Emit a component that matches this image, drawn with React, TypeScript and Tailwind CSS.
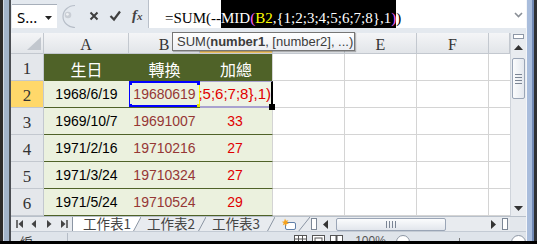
import type { ReactNode } from 'react';

const dataRows = [
  { n: 3, a: '1969/10/7', b: '19691007', c: '33' },
  { n: 4, a: '1971/2/16', b: '19710216', c: '27' },
  { n: 5, a: '1971/3/24', b: '19710324', c: '27' },
  { n: 6, a: '1971/5/24', b: '19710524', c: '29' },
];

function LeftFrame() {
  return (
    <div className="w-[11px] shrink-0 bg-[linear-gradient(to_right,#2e2a2a_0_3px,#d3dae4_3px_4px,#a3b3ca_4px_9px,#4a4d52_9px_11px)]" />
  );
}

function RightFrame() {
  return (
    <div className="w-[11px] shrink-0 bg-[linear-gradient(to_right,#f4f6f9_0_1px,#a9bddc_1px_6px,#7189b4_6px_8px,#2f3134_8px_11px)]" />
  );
}

function FormulaBar() {
  return (
    <div className="flex h-[28px] shrink-0">
      <div className="w-[1px]" />
      <div className="mt-[4px] flex w-[45px] items-center justify-between border-t border-[#a7afba] bg-white pl-[5px] pr-[5px] pt-[2px] text-[15px] text-black">
        <span>S...</span>
        <svg width="7" height="4" viewBox="0 0 7 4">
          <path d="M0 0h7L3.5 4z" fill="#222" />
        </svg>
      </div>
      <div className="flex w-[91px] items-center">
        <svg width="72" height="28" viewBox="0 0 72 28">
          <path d="M18 5.5 A12 11 0 0 0 18 27.5" fill="none" stroke="#b7bec8" strokeWidth="1.2" />
          <circle cx="11" cy="15" r="3.3" fill="#c9ced5" />
          <circle cx="10.4" cy="14.3" r="1.4" fill="#eef0f3" />
          <path d="M33.5 12.5l7 7M40.5 12.5l-7 7" stroke="#3f3f3f" strokeWidth="2" />
          <path d="M53.5 16l3.5 3.5 6-8" fill="none" stroke="#3f3f3f" strokeWidth="2.2" />
        </svg>
        <span className="ml-[3px] mt-[2px] font-['Liberation_Serif',serif] text-[15px] font-bold italic leading-none text-[#444]">
          f<span className="text-[11px]">x</span>
        </span>
      </div>
      <div className="flex w-[362px] items-stretch border-l border-[#b9c0ca] bg-white pl-[16px] font-['Liberation_Serif',serif] text-[15px] text-black">
        <span className="flex items-center pt-[9px]">=SUM(--</span>
        <span className="flex items-center bg-black pt-[9px]">
          <span className="text-white">MID</span>
          <span className="text-[#ff66ff]">(</span>
          <span className="text-[#ffff00]">B2</span>
          <span className="text-white">,{'{'}1;2;3;4;5;6;7;8{'}'},1</span>
          <span className="text-[#ff66ff]">)</span>
        </span>
        <span className="flex items-center pt-[9px]">)</span>
      </div>
      <div className="flex w-[16px] items-center justify-center bg-white pt-[2px]">
        <svg width="9" height="6" viewBox="0 0 9 6">
          <path d="M1 1l3.5 3.5L8 1" fill="none" stroke="#8a8f96" strokeWidth="1.6" />
        </svg>
      </div>
    </div>
  );
}

function Cell({ className = '', children }: { className?: string; children?: ReactNode }) {
  return <div className={`flex items-center justify-center overflow-hidden ${className}`}>{children}</div>;
}

// C and D sit under the tooltip, so their letters are not shown
function ColHead({ label, active }: { label?: string; active?: boolean }) {
  return (
    <Cell
      className={`border-r border-b border-[#c3c8cf] pt-[3px] font-['Liberation_Serif',serif] text-[16px] text-[#333] ${
        active ? 'bg-[linear-gradient(#f9e3a8,#f5c765)]' : 'bg-[linear-gradient(#f4f5f7,#e2e5e9)]'
      }`}
    >
      {label}
    </Cell>
  );
}

function RowHead({ n, active }: { n: number; active?: boolean }) {
  return (
    <Cell
      className={`border-r border-b border-[#c3c8cf] pt-[4px] font-['Liberation_Serif',serif] text-[17px] text-[#333] ${
        active ? 'bg-[#ffd86a]' : 'bg-[#e4e7eb]'
      }`}
    >
      {n}
    </Cell>
  );
}

function EmptyCells({ count = 4 }: { count?: number }) {
  return (
    <>
      {Array.from({ length: count }).map((_, i) => (
        <div key={i} className={`bg-white border-b border-[#d4d4d4] ${i < count - 1 ? 'border-r' : ''}`} />
      ))}
    </>
  );
}

function SheetGrid() {
  return (
    <div className="relative grid w-[499px] grid-cols-[33px_85px_71px_73px_72px_72px_72px_21px] grid-rows-[21px_repeat(6,27px)] font-['Liberation_Sans',sans-serif] text-[14px]">
      <div className="relative border-r border-b border-[#c3c8cf] bg-[linear-gradient(#f4f5f7,#e2e5e9)]">
        <svg className="absolute bottom-[3px] right-[2px]" width="14" height="13" viewBox="0 0 14 13">
          <path d="M14 0V13H0z" fill="#c2c7ce" />
        </svg>
      </div>
      <ColHead label="A" />
      <ColHead label="B" />
      <ColHead active />
      <ColHead />
      <ColHead label="E" />
      <ColHead label="F" />
      <ColHead />

      <RowHead n={1} />
      <Cell className="bg-[#4f6228] pt-[2px] font-['Noto_Sans_CJK_TC',sans-serif] text-[16px] text-white">生日</Cell>
      <Cell className="bg-[#4f6228] pt-[2px] font-['Noto_Sans_CJK_TC',sans-serif] text-[16px] text-white">轉換</Cell>
      <Cell className="border-r border-[#d4d4d4] bg-[#4f6228] pt-[2px] font-['Noto_Sans_CJK_TC',sans-serif] text-[16px] text-white">加總</Cell>
      <EmptyCells />

      <RowHead n={2} active />
      <Cell className="border-b border-[#4f6228] bg-[#ebf1de] pt-[1px] text-black">1968/6/19</Cell>
      <Cell className="relative border-b border-[#4f6228] bg-[#ebf1de] pt-[1px] text-[#953735]">
        19680619
        <div className="pointer-events-none absolute inset-y-0 left-[-1px] right-[-1px] border-y-2 border-l-2 border-r-2 border-[#0000ff] border-r-[#ffff00]" />
        <div className="absolute left-[-2px] top-[-1px] h-[5px] w-[5px] bg-[#0000ff]" />
        <div className="absolute right-[-2px] top-[-1px] h-[5px] w-[5px] bg-[#0000ff]" />
        <div className="absolute bottom-[-2px] left-[-2px] h-[5px] w-[5px] bg-[#0000ff]" />
        <div className="absolute bottom-[-2px] right-[-2px] h-[5px] w-[5px] bg-[#e6e600]" />
      </Cell>
      <div className="relative flex items-center justify-end border-t border-b-2 border-r-2 border-t-[#a8a2cf] border-b-[#a8a2cf] border-r-black bg-[#eef3e4] pt-[1px]">
        <span className="whitespace-nowrap text-[15px] text-[#e00000]">;5;6;7;8{'}'},1)</span>
        <div className="absolute bottom-[-4px] right-[-4px] h-[6px] w-[6px] bg-black" />
      </div>
      <EmptyCells />

      {dataRows.map((r) => (
        <DataRow key={r.n} {...r} />
      ))}
    </div>
  );
}

function DataRow({ n, a, b, c }: { n: number; a: string; b: string; c: string }) {
  return (
    <>
      <RowHead n={n} />
      <Cell className="border-b border-[#4f6228] bg-[#ebf1de] pt-[1px] text-black">{a}</Cell>
      <Cell className="border-b border-[#4f6228] bg-[#ebf1de] pt-[1px] text-[#953735]">{b}</Cell>
      <Cell className="border-b border-r border-b-[#4f6228] border-r-[#d4d4d4] bg-[#ebf1de] pt-[1px] pr-[2px] text-[#e00000]">{c}</Cell>
      <EmptyCells />
    </>
  );
}

function VScroll() {
  return (
    <div className="flex w-[16px] flex-col border-l border-[#cfd4db] bg-[#e9ecf0]">
      <div className="flex h-[7px] items-start justify-center">
        <div className="mt-[1px] h-[5px] w-[11px] border border-[#8d97a6] bg-white" />
      </div>
      <div className="flex h-[15px] items-center justify-center">
        <svg width="9" height="5" viewBox="0 0 9 5">
          <path d="M0 5L4.5 0L9 5z" fill="#333" />
        </svg>
      </div>
      <div className="h-[3px]" />
      <div className="mx-[1px] flex h-[41px] flex-col items-center justify-center gap-[2px] rounded-[2px] border border-[#9aa5b6] bg-[linear-gradient(to_right,#fbfcfd,#e4e8ee)]">
        <div className="h-[1px] w-[7px] bg-[#7b8594]" />
        <div className="h-[1px] w-[7px] bg-[#7b8594]" />
        <div className="h-[1px] w-[7px] bg-[#7b8594]" />
        <div className="h-[1px] w-[7px] bg-[#7b8594]" />
      </div>
      <div className="flex-1" />
      <div className="flex h-[16px] items-center justify-center">
        <svg width="9" height="5" viewBox="0 0 9 5">
          <path d="M0 0L4.5 5L9 0z" fill="#333" />
        </svg>
      </div>
    </div>
  );
}

function Slant({ active }: { active?: boolean }) {
  return (
    <svg width="8" height="15" viewBox="0 0 8 15" className="shrink-0">
      {active && <path d="M0 0H8L0 15z" fill="#fff" />}
      <path d="M0 15L8 0" stroke="#8b95a3" strokeWidth="1" />
    </svg>
  );
}

function TabBar() {
  return (
    <div className="flex h-[15px] shrink-0 border-t border-[#b8c0ca] bg-[#e8ebef] font-['Noto_Sans_CJK_TC',sans-serif] text-[13.5px] leading-none text-[#444]">
      <div className="flex w-[61px] items-center">
        <svg width="61" height="14" viewBox="0 0 61 14">
          <path d="M6 3v8" stroke="#444" strokeWidth="1.5" />
          <path d="M12 3v8L7.5 7z" fill="#444" />
          <path d="M25 3v8L20.5 7z" fill="#444" />
          <path d="M36 3v8L40.5 7z" fill="#444" />
          <path d="M50 3v8L54.5 7z" fill="#444" />
          <path d="M56 3v8" stroke="#444" strokeWidth="1.5" />
        </svg>
      </div>
      <div className="flex w-[61px] items-end border-l border-[#8b95a3] bg-white pb-[1px] pl-[10px]">工作表1</div>
      <Slant active />
      <div className="flex w-[57px] items-end pb-[1px] pl-[6px]">工作表2</div>
      <Slant />
      <div className="flex w-[61px] items-end pb-[1px] pl-[6px]">工作表3</div>
      <Slant />
      <div className="flex w-[23px] items-center pl-[6px]">
        <svg width="16" height="13" viewBox="0 0 16 13">
          <rect x="4.5" y="4.5" width="10" height="7" rx="1.5" fill="#fff" stroke="#5f7fa8" />
          <path d="M4 0.5l1 2.3 2.4-0.6-1.4 2 1.9 1.5-2.4 0.2-0.2 2.4-1.3-2-2.2 1 0.9-2.2-2-1.3 2.4-0.4z" fill="#f6a21c" />
        </svg>
      </div>
      <svg width="12" height="15" viewBox="0 0 12 15" className="shrink-0">
        <path d="M0 15L12 0" stroke="#8b95a3" strokeWidth="1" />
      </svg>
      <div className="flex w-[8px] items-center justify-center">
        <div className="h-[12px] w-[6px] border border-[#7c8796] bg-white" />
      </div>
      <div className="flex w-[182px] items-center">
        <div className="flex w-[14px] items-center justify-center">
          <svg width="5" height="9" viewBox="0 0 5 9">
            <path d="M5 0V9L0 4.5z" fill="#333" />
          </svg>
        </div>
        <div className="w-[4px]" />
        <div className="flex h-[13px] w-[110px] items-center justify-center gap-[2px] rounded-[2px] border border-[#9aa5b6] bg-[linear-gradient(#fbfcfd,#e2e6ec)]">
          <div className="h-[7px] w-[1px] bg-[#7b8594]" />
          <div className="h-[7px] w-[1px] bg-[#7b8594]" />
          <div className="h-[7px] w-[1px] bg-[#7b8594]" />
          <div className="h-[7px] w-[1px] bg-[#7b8594]" />
        </div>
        <div className="flex-1" />
        <div className="flex w-[14px] items-center justify-center">
          <svg width="5" height="9" viewBox="0 0 5 9">
            <path d="M0 0V9L5 4.5z" fill="#333" />
          </svg>
        </div>
      </div>
      <div className="flex w-[10px] items-center justify-center">
        <div className="h-[12px] w-[6px] border border-[#7c8796] bg-white" />
      </div>
      <div className="w-[16px] bg-[#e3e7ec]" />
    </div>
  );
}

function StatusBar() {
  return (
    <div className="flex h-[10px] shrink-0 items-start overflow-hidden border-t border-[#c4cbd4] bg-[#dfe4ea] font-['Noto_Sans_CJK_TC',sans-serif] text-[13px] leading-none text-[#333]">
      <span className="ml-[9px] mt-[3px]">編輯</span>
      <div className="ml-[22px] mt-[1px] h-[12px] w-[1px] bg-[#b5bcc6]" />
      <div className="ml-[226px] mt-[3px] flex gap-[5px]">
        <svg width="13" height="10" viewBox="0 0 13 10">
          <rect x="0.5" y="0.5" width="12" height="10" fill="#fff" stroke="#555" />
          <path d="M0.5 4h12M4.5 0.5v10M8.5 0.5v10" stroke="#555" />
        </svg>
        <svg width="13" height="10" viewBox="0 0 13 10">
          <rect x="0.5" y="0.5" width="12" height="10" fill="#fff" stroke="#555" />
          <rect x="3" y="3" width="7" height="8" fill="none" stroke="#555" />
        </svg>
        <svg width="13" height="10" viewBox="0 0 13 10">
          <rect x="0.5" y="0.5" width="12" height="10" fill="#fff" stroke="#555" />
          <path d="M6.5 0.5v10" stroke="#555" strokeWidth="2" />
        </svg>
      </div>
      <span className="ml-[12px] mt-[3px] font-['Liberation_Sans',sans-serif] text-[12px] text-[#555]">100%</span>
      <div className="ml-[10px] mt-[3px] h-[15px] w-[15px] rounded-full border border-[#8d96a3] bg-white" />
      <div className="ml-[49px] mt-[6px] h-[6px] w-[1px] bg-[#777]" />
      <div className="ml-[51px] mt-[3px] h-[15px] w-[15px] rounded-full border border-[#8d96a3] bg-white" />
    </div>
  );
}

export default function App() {
  return (
    <div className="relative flex h-[244px] w-[537px] flex-col overflow-hidden bg-[#e4e9ef]">
      <div className="flex h-[241px]">
        <LeftFrame />
        <div className="flex w-[515px] flex-col">
          <FormulaBar />
          <div className="h-[5px] shrink-0" />
          <div className="flex h-[183px] shrink-0">
            <SheetGrid />
            <VScroll />
          </div>
          <TabBar />
          <StatusBar />
        </div>
        <RightFrame />
      </div>
      <div className="h-[3px] bg-black" />

      <div className="absolute left-[172px] top-[32px] flex h-[19px] w-[183px] items-center border border-[#767676] bg-[linear-gradient(#ffffff,#eceef3)] pl-[4px] font-['Liberation_Sans',sans-serif] text-[13px] text-[#3c3c3c] shadow-[1px_1px_1px_rgba(0,0,0,0.25)]">
        SUM(<b>number1</b>, [number2], ...)
      </div>
    </div>
  );
}
